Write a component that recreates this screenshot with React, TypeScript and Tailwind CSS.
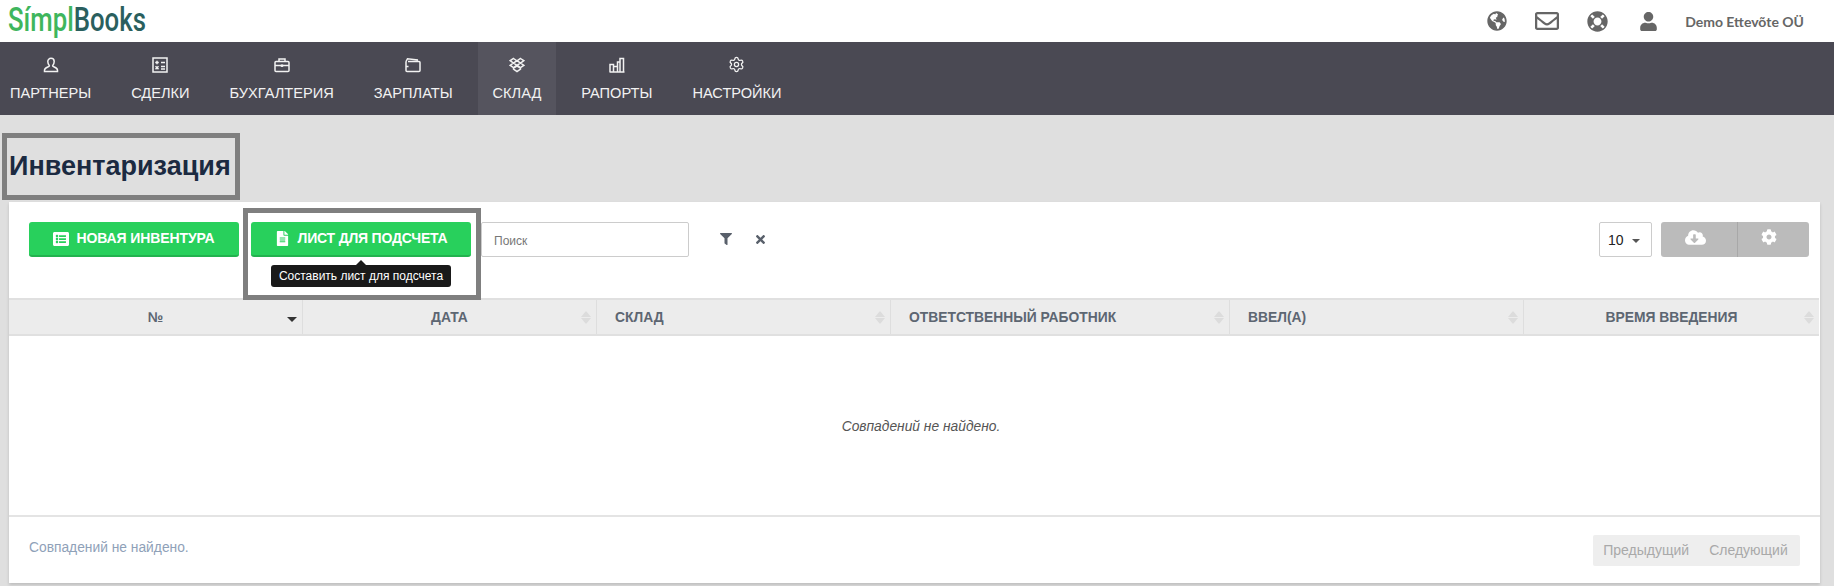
import React from "react";
import { FaGlobeAmericas, FaRegEnvelope, FaLifeRing, FaUser, FaListAlt, FaFileAlt, FaFilter, FaTimes, FaCloudDownloadAlt, FaCog } from "react-icons/fa";
import { Settings } from "lucide-react";

const cls = { fill: "none", stroke: "currentColor", strokeWidth: 1.5 } as const;
const navIcons: Record<string, React.ReactNode> = {
  user: <svg width="16" height="16" viewBox="0 0 16 16" {...cls}><path d="M4.800 4.500a3.200 3.200 0 1 1 6.400 0c0 2-1 3.300-1.600 4.300-.2 1.200 4.900 1.500 4.900 4.400V14.500H1.500v-1.300c0-2.900 5.100-3.200 4.900-4.400C5.800 7.800 4.800 6.500 4.800 4.500z" /></svg>,
  calc: <svg width="16" height="16" viewBox="0 0 16 16" {...cls}><rect x="1" y="1" width="14" height="14" /><path d="M3.200 5.500h3.600M5 3.700v3.600M9 5.500h4M3.500 9.200l3 3M6.500 9.200l-3 3M9 9.500h4M9 12h4" /></svg>,
  case: <svg width="16" height="16" viewBox="0 0 16 16" {...cls}><rect x="1" y="4.500" width="14" height="10" rx="1" /><path d="M5 4.500V2h6v2.500M1 8.500h14" /><rect x="6.800" y="7.500" width="2.400" height="2.400" fill="currentColor" stroke="none" /></svg>,
  wallet: <svg width="16" height="16" viewBox="0 0 16 16" {...cls}><path d="M1 4.500V13.500a1 1 0 0 0 1 1h12a1 1 0 0 0 1-1V5.500a1 1 0 0 0-1-1H3M1 4.500 2.500 1.700 13 3M1 9.500h2.500" /></svg>,
  box: <svg width="16" height="16" viewBox="0 0 16 16" fill="none" stroke="currentColor" strokeWidth="1.500"><path d="M4.500 1.500 7.800 3.700 4.500 6 1.200 3.700zM11.500 1.500 14.800 3.700 11.500 6 8.200 3.700zM4.500 6 7.800 8.300 4.500 10.500 1.200 8.300zM11.500 6 14.800 8.300 11.500 10.500 8.200 8.300zM4.500 11 8 9.200 11.500 11V12L8 14.500 4.500 12z" /></svg>,
  chart: <svg width="16" height="16" viewBox="0 0 16 16" {...cls}><path d="M1 15V7.500h3.500V15M4.500 15V9.500H8.500V15M8.500 15V5h2.500v10M11 15V1.500h3.500V15zM.5 15h15" /></svg>,
  gear: <Settings size={17} strokeWidth={1.8} className="-mt-[1px]" />,
};

const nav = [
  ["ПАРТНЕРЫ", "user"], ["СДЕЛКИ", "calc"], ["БУХГАЛТЕРИЯ", "case"], ["ЗАРПЛАТЫ", "wallet"],
  ["СКЛАД", "box"], ["РАПОРТЫ", "chart"], ["НАСТРОЙКИ", "gear"],
];

const Sort = () => (
  <span className="flex flex-col gap-[1px] absolute right-[5px] top-[11px]">
    <span className="w-0 h-0 border-x-[5px] border-x-transparent border-b-[6px] border-b-[#dcdcdc]" />
    <span className="w-0 h-0 border-x-[5px] border-x-transparent border-t-[6px] border-t-[#dcdcdc]" />
  </span>
);

const cols: [string, string, string][] = [
  ["№", "w-[294px]", "justify-center"],
  ["ДАТА", "w-[294px]", "justify-center"],
  ["СКЛАД", "w-[294px]", "justify-start pl-[18px]"],
  ["ОТВЕТСТВЕННЫЙ РАБОТНИК", "w-[339px]", "justify-start pl-[18px]"],
  ["ВВЕЛ(А)", "w-[294px]", "justify-start pl-[18px]"],
  ["ВРЕМЯ ВВЕДЕНИЯ", "flex-1", "justify-center"],
];

export default function App() {
  return (
    <div className="w-[1834px] h-[586px] overflow-hidden bg-[#dfdfdf] font-['Liberation_Sans',sans-serif]">
      <header className="h-[42px] bg-white flex items-center justify-between">
        <div className="ml-[8px] text-[33px] leading-none font-medium font-['Roboto',sans-serif] origin-left scale-x-[0.78] whitespace-nowrap -mt-[4px]">
          <span className="text-[#3fb65d]">Símpl</span><span className="text-[#2a5f5e]">Books</span>
        </div>
        <div className="flex items-center text-[#666666] mr-[30px]">
          <FaGlobeAmericas className="text-[20px] mr-[28px]" />
          <FaRegEnvelope className="text-[24px] mr-[28px]" />
          <FaLifeRing className="text-[21px] mr-[31px]" />
          <FaUser className="text-[19px] mr-[27px]" />
          <span className="font-['Lato',sans-serif] font-bold text-[14px]">Demo Ettevõte OÜ</span>
        </div>
      </header>
      <nav className="h-[73px] bg-[#4a4953] flex gap-[10px] -ml-[5px] pr-[5px]">
        {nav.map(([label, icon]) => (
          <a key={label} className={`px-[15px] flex flex-col items-center text-[#f2f2f2] text-[14.6px] pt-[15px] ${label === "СКЛАД" ? "bg-[#55545e]" : ""}`}>
            <span className="h-[16px]">{navIcons[icon]}</span>
            <span className="mt-[10px] leading-[20px]">{label}</span>
          </a>
        ))}
      </nav>
      <div className="h-[18px]" />
      <div className="ml-[2px] w-[238px] h-[67px] border-[5px] border-[#7f7f7f] flex items-center pl-[2px]">
        <h1 className="text-[27px] font-bold text-[#1b2a41] whitespace-nowrap">Инвентаризация</h1>
      </div>
      <main className="ml-[9px] mt-[2px] w-[1811px] h-[381px] bg-white shadow-[0_2px_3px_rgba(0,0,0,0.15)] flex flex-col">
        <div className="h-[96px] relative flex items-start pt-[20px] pl-[20px] pr-[10px]">
          <button className="w-[210px] h-[35px] rounded-[3px] bg-[#28d05c] border-b-[2px] border-[#22b24e] text-white font-bold text-[14px] tracking-[-0.1px] flex items-center justify-center gap-[7px]">
            <FaListAlt className="text-[16px]" />НОВАЯ ИНВЕНТУРА
          </button>
          <div className="relative ml-[4px] -mt-[14px] w-[238px] h-[92px] border-[5px] border-[#7f7f7f] pt-[9px] pl-[3px] pr-[3px] shrink-0">
            <button className="w-[220px] h-[35px] rounded-[3px] bg-[#28d05c] border-b-[2px] border-[#22b24e] text-white font-bold text-[14px] tracking-[-0.2px] flex items-center justify-center gap-[8px]">
              <FaFileAlt className="text-[15px]" />ЛИСТ ДЛЯ ПОДСЧЕТА
            </button>
            <div className="absolute left-[23px] top-[52px] h-[22px] w-[180px] rounded-[3px] bg-[#191919] text-white text-[12px] flex items-center justify-center">
              <span className="absolute -top-[5px] left-[85px] w-0 h-0 border-x-[5px] border-x-transparent border-b-[5px] border-b-[#191919]" />
              Составить лист для подсчета
            </div>
          </div>
          <input placeholder="Поиск" className="w-[208px] h-[35px] border border-[#cccccc] rounded-[2px] px-[12px] pt-[2px] text-[12px] placeholder:text-[#777777] outline-none" />
          <FaFilter className="text-[12px] text-[#59606b] ml-[31px] mt-[11px]" />
          <FaTimes className="text-[13px] text-[#59606b] ml-[22px] mt-[11px]" />
          <div className="flex-1" />
          <div className="w-[53px] h-[35px] border border-[#cccccc] rounded-[2px] flex items-center pl-[8px] pt-[2px] text-[14px] text-[#222222]">
            10<span className="ml-[8px] w-0 h-0 border-x-[4px] border-x-transparent border-t-[4px] border-t-[#555555]" />
          </div>
          <div className="ml-[9px] mr-[1px] w-[148px] h-[35px] rounded-[3px] bg-[#bbbbbb] flex text-white">
            <div className="w-[77px] border-r border-[#a8a8a8] flex justify-center pt-[5px] pr-[8px]"><FaCloudDownloadAlt className="text-[21px]" /></div>
            <div className="flex-1 flex justify-center pt-[7px] pr-[9px]"><FaCog className="text-[16px]" /></div>
          </div>
        </div>
        <div className="h-[38px] mr-[1px] bg-[#ececec] border-y-2 border-[#e0e0e0] flex text-[13.85px] font-bold text-[#5d6672]">
          {cols.map(([t, w, j], i) => (
            <div key={t} className={`relative h-full flex items-center ${w} ${j} ${i < 5 ? "border-r border-[#dedede]" : ""}`}>
              {t}
              {i === 0 ? <span className="absolute right-[5px] top-[17px] w-0 h-0 border-x-[5px] border-x-transparent border-t-[5px] border-t-[#333333]" /> : <Sort />}
            </div>
          ))}
        </div>
        <div className="h-[181px] border-b-2 border-[#e4e4e4] flex items-center justify-center pl-[13px] pt-[4px] italic text-[13.8px] text-[#555555]">
          Совпадений не найдено.
        </div>
        <div className="flex-1 flex items-center justify-between pl-[20px] pr-[20px]">
          <span className="text-[13.8px] text-[#8fa1b8] -mt-[3px]">Совпадений не найдено.</span>
          <div className="w-[207px] h-[31px] bg-[#eeeeee] rounded-[2px] flex items-center justify-center gap-[20px] text-[14px] text-[#a9a9a9] pr-[2px]">
            <span>Предыдущий</span><span>Следующий</span>
          </div>
        </div>
      </main>
    </div>
  );
}
